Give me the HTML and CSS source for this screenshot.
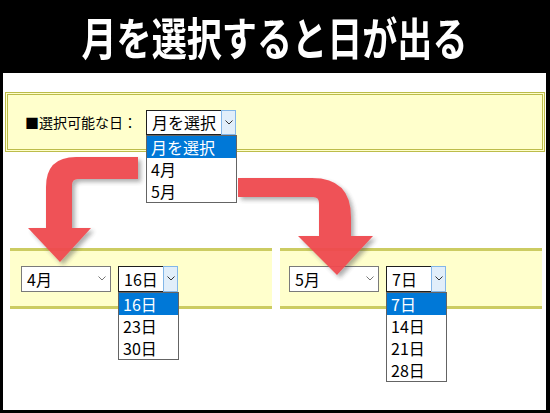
FILE: index.html
```html
<!DOCTYPE html>
<html lang="ja">
<head>
<meta charset="utf-8">
<title>月を選択すると日が出る</title>
<link rel="stylesheet" href="styles.css">
</head>
<body>
  <header class="title-bar">
    <h1 class="title">月を選択すると日が出る</h1>
  </header>

  <main class="sheet">
    <section class="panel-top">
      <span class="label">■選択可能な日：</span>
      <div class="select select-open select-top">
        <span class="select-value">月を選択</span>
        <span class="select-btn">
          <svg width="8" height="5" viewBox="0 0 8 5"><polyline points="0.5,0.5 4,4 7.5,0.5" fill="none" stroke="#333" stroke-width="1"/></svg>
        </span>
        <ul class="options">
          <li class="option is-active">月を選択</li>
          <li class="option">4月</li>
          <li class="option">5月</li>
        </ul>
      </div>
    </section>

    <div class="result-row">
      <section class="panel-result">
        <div class="select select-month">
          <span class="select-value">4月</span>
          <span class="chev">
            <svg width="8" height="5" viewBox="0 0 8 5"><polyline points="0.5,0.5 4,4 7.5,0.5" fill="none" stroke="#777" stroke-width="1"/></svg>
          </span>
        </div>
        <div class="select select-open select-day">
          <span class="select-value">16日</span>
          <span class="select-btn">
            <svg width="8" height="5" viewBox="0 0 8 5"><polyline points="0.5,0.5 4,4 7.5,0.5" fill="none" stroke="#333" stroke-width="1"/></svg>
          </span>
          <ul class="options">
            <li class="option is-active">16日</li>
            <li class="option">23日</li>
            <li class="option">30日</li>
          </ul>
        </div>
      </section>

      <section class="panel-result">
        <div class="select select-month">
          <span class="select-value">5月</span>
          <span class="chev">
            <svg width="8" height="5" viewBox="0 0 8 5"><polyline points="0.5,0.5 4,4 7.5,0.5" fill="none" stroke="#777" stroke-width="1"/></svg>
          </span>
        </div>
        <div class="select select-open select-day">
          <span class="select-value">7日</span>
          <span class="select-btn">
            <svg width="8" height="5" viewBox="0 0 8 5"><polyline points="0.5,0.5 4,4 7.5,0.5" fill="none" stroke="#333" stroke-width="1"/></svg>
          </span>
          <ul class="options">
            <li class="option is-active">7日</li>
            <li class="option">14日</li>
            <li class="option">21日</li>
            <li class="option">28日</li>
          </ul>
        </div>
      </section>
    </div>
  </main>

  <!-- bent arrows pointing from the month list to each result -->
  <svg class="arrows" viewBox="0 0 550 413" width="550" height="413">
    <defs>
      <filter id="shade" x="-20%" y="-20%" width="150%" height="150%">
        <feDropShadow dx="3" dy="3" stdDeviation="2" flood-color="#444" flood-opacity="0.45"/>
      </filter>
    </defs>
    <path class="arrow" filter="url(#shade)"
          d="M138,157 L76,157 Q46,157 46,187 L46,228 L28,228 L60,262 L91,228 L72,228 L72,185 Q72,179 78,179 L138,179 Z"/>
    <path class="arrow" filter="url(#shade)"
          d="M238,178 L312,178 Q351,178 351,217 L351,236 L373,236 L337,275 L298,236 L319,236 L319,203 Q319,197 313,197 L238,197 Z"/>
  </svg>
</body>
</html>
```

FILE: styles.css
```css
* {
  box-sizing: border-box;
}

html,
body {
  margin: 0;
  padding: 0;
}

body {
  position: relative;
  width: 550px;
  height: 413px;
  overflow: hidden;
  background: #000;
  font-family: "Noto Sans CJK JP", "Noto Sans", sans-serif;
  color: #000;
}

/* heading band */
.title-bar {
  height: 73px;
  display: flex;
  align-items: center;
  justify-content: center;
}

.title {
  margin: 0;
  color: #fff;
  font-size: 45px;
  font-weight: 700;
  line-height: 1;
  white-space: nowrap;
  transform: scaleX(0.78);
}

/* white work area */
.sheet {
  margin-left: 3px;
  width: 543px;
  height: 337px;
  padding-top: 19px;
  background: #fff;
}

.panel-top {
  margin-left: 2px;
  width: 540px;
  height: 60px;
  border: 3px double #bcbc4a;
  background: #ffffcc;
  display: flex;
  align-items: center;
  gap: 9px;
  padding-left: 17px;
}

.label {
  font-size: 14px;
  line-height: 20px;
}

/* drop-down controls */
.select {
  position: relative;
  display: flex;
  height: 26px;
  border: 1px solid #7a7a7a;
  background: #fff;
  font-size: 16px;
  line-height: 24px;
}

.select-value {
  flex: 1;
  padding-left: 5px;
  white-space: nowrap;
}

.select-open {
  border-color: #1e1e1e;
}

.select-btn {
  width: 15px;
  margin: -1px -1px -1px 0;
  background: #e1eefa;
  border: 1px solid #82b6e8;
  display: flex;
  align-items: center;
  justify-content: center;
}

.chev {
  width: 17px;
  display: flex;
  align-items: center;
  justify-content: center;
}

.select-top {
  width: 90px;
  height: 25px;
  line-height: 23px;
}

.select-month {
  width: 90px;
}

.select-day {
  width: 60px;
}

.options {
  position: absolute;
  top: calc(100% + 1px);
  left: -1px;
  width: calc(100% + 3px);
  margin: 0;
  padding: 0;
  list-style: none;
  background: #fff;
  border: 1px solid #646464;
  z-index: 3;
}

.option {
  height: 22px;
  line-height: 22px;
  padding-left: 4px;
  font-size: 16px;
  white-space: nowrap;
}

.option.is-active {
  background: #0078d7;
  color: #fff;
}

/* lower result panels */
.result-row {
  display: flex;
  gap: 8px;
  margin-top: 96px;
  padding-left: 7px;
}

.panel-result {
  width: 262px;
  height: 61px;
  border-top: 3px solid #cccc62;
  border-bottom: 3px solid #cccc62;
  background: #ffffcc;
  display: flex;
  align-items: center;
  gap: 7px;
  padding-left: 11px;
}

.panel-result + .panel-result {
  padding-left: 9px;
}

/* arrow overlay */
.arrows {
  position: absolute;
  left: 0;
  top: 0;
  pointer-events: none;
  z-index: 5;
}

.arrow {
  fill: #ef4a50;
  opacity: 0.95;
}
```
